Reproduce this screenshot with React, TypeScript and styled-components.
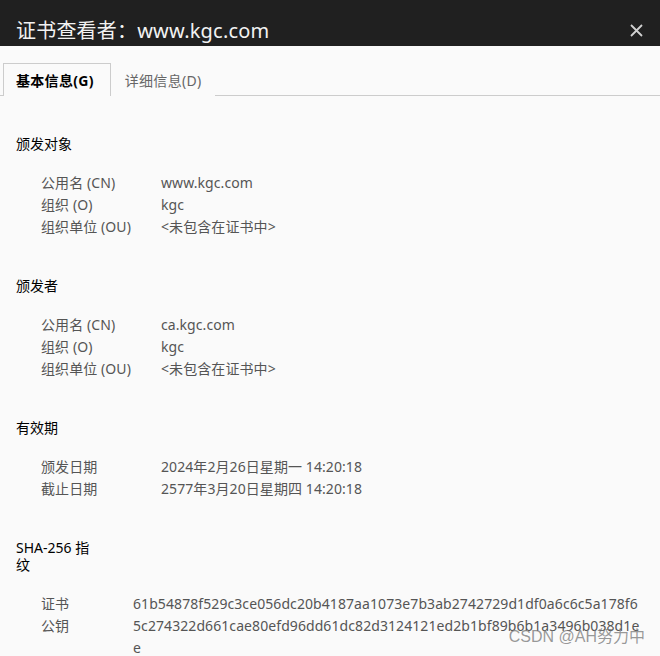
import React from "react";
import styled, { createGlobalStyle } from "styled-components";

const Global = createGlobalStyle`
  html, body { margin: 0; padding: 0; background: #fafafa; }
  body { font-family: "Noto Sans", "Noto Sans CJK SC", sans-serif; }
`;

const Window = styled.div`
  width: 660px;
  height: 656px;
  background: #fafafa;
  position: relative;
  overflow: hidden;
`;

const TitleBar = styled.div`
  height: 46px;
  background: #202020;
  display: flex;
  align-items: flex-start;
  justify-content: space-between;
  padding: 18px 16px 0 16px;
  box-sizing: border-box;
`;

const Title = styled.div`
  color: #f2f2f2;
  font-size: 20px;
  line-height: 26px;
  letter-spacing: 0.2px;
`;

const CloseBtn = styled.div`
  width: 16px;
  height: 16px;
  margin-top: 4px;
  display: flex;
  align-items: center;
  justify-content: center;
`;

const TabBar = styled.div`
  height: 50px;
  box-sizing: border-box;
  border-bottom: 1px solid #cccccc;
  display: flex;
  align-items: flex-end;
  padding-left: 3px;
`;

const Tab = styled.div<{ $active?: boolean }>`
  height: 33px;
  box-sizing: border-box;
  margin-bottom: -1px;
  display: flex;
  align-items: center;
  font-size: 14px;
  padding: 0 ${(p) => (p.$active ? "16px 1px 12px" : "13px 1px 13px")};
  border: 1px solid ${(p) => (p.$active ? "#cccccc" : "transparent")};
  border-bottom: none;
  background: #fafafa;
  color: ${(p) => (p.$active ? "#000" : "#666")};
  font-weight: ${(p) => (p.$active ? 700 : 400)};
  letter-spacing: 0.3px;
`;

const Content = styled.div`
  padding: 39px 19px 0 16px;
`;

const Section = styled.section`
  & + & {
    margin-top: 39px;
  }
`;

const Heading = styled.div`
  font-size: 14px;
  line-height: 17px;
  color: #000;
  max-width: 82px;
  margin-bottom: 20px;
`;

const Rows = styled.div<{ $labelWidth: number }>`
  display: grid;
  grid-template-columns: ${(p) => p.$labelWidth}px 1fr;
  padding-left: 25px;
  font-size: 14px;
  line-height: 22px;
  color: #555;
  letter-spacing: 0.08px;
`;

const Label = styled.div`
  white-space: nowrap;
`;

const Value = styled.div`
  word-break: break-all;
`;

const Watermark = styled.div`
  position: absolute;
  right: 15px;
  bottom: 9px;
  font-size: 16px;
  color: rgba(120, 120, 120, 0.75);
  font-family: "Liberation Sans", "Noto Sans CJK SC", sans-serif;
`;

type Row = [string, string];

const sections: { title: string; labelWidth: number; rows: Row[] }[] = [
  {
    title: "颁发对象",
    labelWidth: 120,
    rows: [
      ["公用名 (CN)", "www.kgc.com"],
      ["组织 (O)", "kgc"],
      ["组织单位 (OU)", "<未包含在证书中>"],
    ],
  },
  {
    title: "颁发者",
    labelWidth: 120,
    rows: [
      ["公用名 (CN)", "ca.kgc.com"],
      ["组织 (O)", "kgc"],
      ["组织单位 (OU)", "<未包含在证书中>"],
    ],
  },
  {
    title: "有效期",
    labelWidth: 120,
    rows: [
      ["颁发日期", "2024年2月26日星期一 14:20:18"],
      ["截止日期", "2577年3月20日星期四 14:20:18"],
    ],
  },
  {
    title: "SHA-256 指纹",
    labelWidth: 92,
    rows: [
      ["证书", "61b54878f529c3ce056dc20b4187aa1073e7b3ab2742729d1df0a6c6c5a178f6"],
      ["公钥", "5c274322d661cae80efd96dd61dc82d3124121ed2b1bf89b6b1a3496b038d1ee"],
    ],
  },
];

export default function App() {
  return (
    <Window>
      <Global />
      <TitleBar>
        <Title>证书查看者：www.kgc.com</Title>
        <CloseBtn>
          <svg width="13" height="13" viewBox="0 0 13 13">
            <path d="M1 1 L12 12 M12 1 L1 12" stroke="#d0d0d0" strokeWidth="1.8" />
          </svg>
        </CloseBtn>
      </TitleBar>
      <TabBar>
        <Tab $active>基本信息(G)</Tab>
        <Tab>详细信息(D)</Tab>
      </TabBar>
      <Content>
        {sections.map((s) => (
          <Section key={s.title}>
            <Heading>{s.title}</Heading>
            <Rows $labelWidth={s.labelWidth}>
              {s.rows.map(([l, v]) => (
                <React.Fragment key={l}>
                  <Label>{l}</Label>
                  <Value>{v}</Value>
                </React.Fragment>
              ))}
            </Rows>
          </Section>
        ))}
      </Content>
      <Watermark>CSDN @AH努力中</Watermark>
    </Window>
  );
}
